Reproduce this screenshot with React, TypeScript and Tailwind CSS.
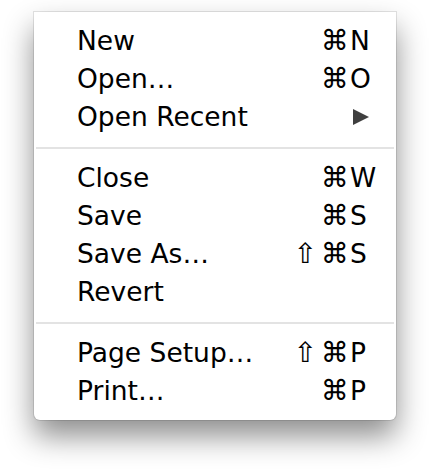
const groups: { label: string; shift?: boolean; key?: string; submenu?: boolean }[][] = [
  [
    { label: "New", key: "N" },
    { label: "Open…", key: "O" },
    { label: "Open Recent", submenu: true },
  ],
  [
    { label: "Close", key: "W" },
    { label: "Save", key: "S" },
    { label: "Save As…", shift: true, key: "S" },
    { label: "Revert" },
  ],
  [
    { label: "Page Setup…", shift: true, key: "P" },
    { label: "Print…", key: "P" },
  ],
];

export default function App() {
  return (
    <div className="w-[430px] h-[474px] bg-white pt-[12px] font-['DejaVu_Sans',sans-serif]">
      <div className="mx-auto w-[362px] bg-white rounded-b-[6px] py-[10px] pl-[43px] pr-[15px] shadow-[0_0_0_1px_rgba(0,0,0,0.1),0_16px_30px_rgba(0,0,0,0.45)]">
        {groups.map((items, gi) => (
          <div key={gi}>
            {gi > 0 && (
              <div className="-ml-[41px] -mr-[13px] mt-[11px] mb-[10px] h-[2px] bg-[#e3e3e3]" />
            )}
            {items.map((item) => (
              <div
                key={item.label}
                className="flex items-center h-[38px] text-[26.5px] leading-[38px] text-black"
              >
                <span className="flex-1">{item.label}</span>
                <span className="w-[80px] flex justify-end pr-[1px]">
                  {item.shift && <span className="mr-[4px] text-[28px]">⇧</span>}
                  {item.key && <span className="text-[28px]">⌘</span>}
                </span>
                <span className="w-[31px] flex items-center">
                  {item.submenu ? (
                    <svg width="16" height="16" viewBox="0 0 16 16" className="ml-[3px]">
                      <path d="M0 0 L16 8 L0 16 Z" fill="#3f3f3f" />
                    </svg>
                  ) : (
                    item.key
                  )}
                </span>
              </div>
            ))}
          </div>
        ))}
      </div>
    </div>
  );
}
